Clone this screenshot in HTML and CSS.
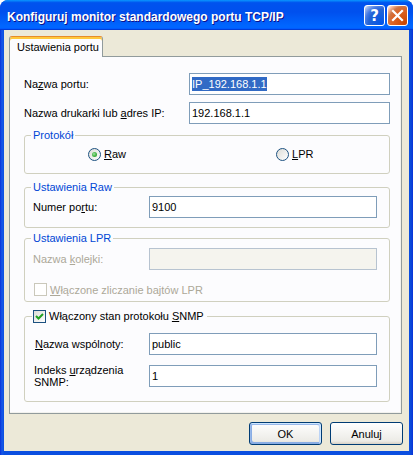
FILE: index.html
```html
<!DOCTYPE html>
<html lang="pl">
<head>
<meta charset="utf-8">
<title>Konfiguruj monitor</title>
<link rel="stylesheet" href="styles.css">
</head>
<body>
<div class="window">
  <div class="titlebar">
    <span class="title">Konfiguruj monitor standardowego portu TCP/IP</span>
    <div class="tb-buttons">
      <span class="tb-btn help">?</span>
      <span class="tb-btn close"><svg width="19" height="19" viewBox="0 0 19 19"><path d="M5 5 L14 14 M14 5 L5 14" stroke="#fff" stroke-width="2.2" stroke-linecap="square"/></svg></span>
    </div>
  </div>
  <div class="frame">
    <div class="tabs"><div class="tab">Ustawienia portu</div></div>
    <div class="panel">
      <div class="row">
        <span class="lbl">Na<u>z</u>wa portu:</span>
        <div class="input"><span class="sel">IP_192.168.1.1</span></div>
      </div>
      <div class="row">
        <span class="lbl">Nazwa drukarki lub <u>a</u>dres IP:</span>
        <div class="input">192.168.1.1</div>
      </div>

      <fieldset class="group proto">
        <legend>Protokół</legend>
        <div class="radios">
          <span class="radio-item first"><span class="radio checked"></span><span><u>R</u>aw</span></span>
          <span class="radio-item"><span class="radio"></span><span><u>L</u>PR</span></span>
        </div>
      </fieldset>

      <fieldset class="group raw">
        <legend>Ustawienia Raw</legend>
        <div class="grow">
          <span class="lbl">Numer po<u>r</u>tu:</span>
          <div class="input">9100</div>
        </div>
      </fieldset>

      <fieldset class="group lpr">
        <legend>Ustawienia LPR</legend>
        <div class="grow disabled">
          <span class="lbl">Nazwa <u>k</u>olejki:</span>
          <div class="input off"></div>
        </div>
        <div class="check-row disabled">
          <span class="cbox off"></span><span><u>W</u>łączone zliczanie bajtów LPR</span>
        </div>
      </fieldset>

      <fieldset class="group snmp">
        <legend class="check-legend"><span class="cbox on"><svg width="11" height="11" viewBox="0 0 11 11"><path d="M2 5 L4.5 7.5 L9 3" fill="none" stroke="#21A121" stroke-width="2"/></svg></span><span>Włączony stan protokołu <u>S</u>NMP</span></legend>
        <div class="grow">
          <span class="lbl ind2"><u>N</u>azwa wspólnoty:</span>
          <div class="input">public</div>
        </div>
        <div class="grow second">
          <span class="lbl two ind1">Indeks <u>u</u>rządzenia<br>SNMP:</span>
          <div class="input">1</div>
        </div>
      </fieldset>
    </div>
    <div class="buttons">
      <span class="btn default">OK</span>
      <span class="btn">Anuluj</span>
    </div>
  </div>
</div>
</body>
</html>
```
FILE: styles.css
```css
* { box-sizing: border-box; }
html, body { margin: 0; padding: 0; }
body {
  width: 413px;
  height: 455px;
  overflow: hidden;
  background: #ffffff;
  font-family: "Liberation Sans", Arial, sans-serif;
  font-size: 11px;
  color: #000;
}
u { text-decoration: underline; text-underline-offset: 1px; }

.window {
  width: 413px;
  height: 455px;
  display: flex;
  flex-direction: column;
  background: linear-gradient(90deg, #0831D9 0, #1658E8 2px, #0B4FE0 4px, #0B4FE0 409px, #0A48D8 411px, #0831D9 413px);
  border-radius: 8px 8px 0 0;
  overflow: hidden;
}

.titlebar {
  height: 30px;
  flex: none;
  display: flex;
  justify-content: space-between;
  align-items: flex-start;
  padding: 0 5px 0 7px;
  background: linear-gradient(180deg, #0997FF 0%, #0053EE 9%, #0050EE 40%, #0066FF 86%, #0066FF 92%, #005BFF 95%, #003DD7 97%, #003DD7 100%);
}
.title {
  color: #fff;
  font-weight: bold;
  font-size: 12px;
  line-height: 16px;
  margin-top: 9px;
  letter-spacing: 0;
  text-shadow: 1px 1px #0F1089;
  white-space: nowrap;
}
.tb-buttons { display: flex; gap: 2px; margin-top: 5px; }
.tb-btn {
  width: 21px;
  height: 21px;
  border: 1px solid #fff;
  border-radius: 3px;
  display: flex;
  align-items: center;
  justify-content: center;
  color: #fff;
  font-family: "DejaVu Sans", sans-serif;
  font-weight: bold;
  font-size: 15px;
}
.help {
  background: radial-gradient(circle at 90% 90%, #0054E9 0%, #2263D5 55%, #4479E4 70%, #A3BBEC 90%, #fff 100%);
}
.close {
  background: radial-gradient(circle at 90% 90%, #CC4600 0%, #DC6527 55%, #CD7546 70%, #FFCCB2 90%, #fff 100%);
}

.frame {
  flex: 1;
  margin: 0 4px 4px 4px;
  background: #ECE9D8;
  padding: 6px 7px 0 5px;
  display: flex;
  flex-direction: column;
}

.tabs { display: flex; height: 20px; }
.tab {
  position: relative;
  z-index: 1;
  width: 94px;
  height: 21px;
  background: #FCFCFE;
  border: 1px solid #919B9C;
  border-top: 1px solid #E68B2C;
  border-bottom: none;
  border-radius: 3px 3px 0 0;
  box-shadow: inset 0 2px #FFC83C;
  padding: 4px 0 0 7px;
  line-height: 13px;
  white-space: nowrap;
}

.panel {
  height: 358px;
  background: #FCFCFE;
  border: 1px solid #919B9C;
  box-shadow: inset -1px -1px #F2F2EE;
  padding: 16px 11px 0 14px;
  display: flex;
  flex-direction: column;
}

.row {
  display: grid;
  grid-template-columns: 165px 201px;
  align-items: center;
  height: 22px;
}
.row + .row { margin-top: 7px; }

.input {
  height: 22px;
  border: 1px solid #7F9DB9;
  background: #fff;
  padding: 0 2px;
  line-height: 20px;
  white-space: nowrap;
}
.input.off { background: #F5F4EE; border-color: #B7C3D0; }
.sel { background: #316AC5; color: #fff; padding: 1px 0; }

.group {
  margin: 0;
  padding: 0 8px;
  border: 1px solid #D0D0BF;
  border-radius: 3px;
  min-width: 0;
}
.group legend {
  color: #0046D5;
  padding: 0 2px;
  margin-left: -2px;
  line-height: 13px;
}
.proto { margin-top: 5px; padding-top: 6px; padding-bottom: 12px; }
.raw { margin-top: 7px; padding-top: 2px; padding-bottom: 9px; }
.lpr { margin-top: 4px; padding-top: 3px; padding-bottom: 5px; }
.snmp { margin-top: 8px; padding-top: 10px; padding-bottom: 13px; }

.radios { display: flex; padding-left: 55px; height: 13px; line-height: 13px; }
.radio-item { display: flex; align-items: center; gap: 3px; }
.radio-item.first { width: 188px; }
.radio {
  width: 13px;
  height: 13px;
  border-radius: 50%;
  border: 1px solid #1D5281;
  background: linear-gradient(135deg, #DCDCD7, #fff);
  display: flex;
  align-items: center;
  justify-content: center;
}
.radio.checked::after {
  content: "";
  width: 5px;
  height: 5px;
  border-radius: 50%;
  background: radial-gradient(circle at 40% 40%, #A6E0A6 0%, #4DBB4D 45%, #1E8C1E 100%);
}

.grow {
  display: grid;
  grid-template-columns: 116px 228px;
  align-items: center;
  min-height: 22px;
}
.grow.second { margin-top: 9px; }
.lbl.two { line-height: 12px; }
.ind2 { padding-left: 2px; }
.ind1 { padding-left: 1px; }
.disabled { color: #ACA899; }

.check-row {
  display: flex;
  align-items: center;
  gap: 3px;
  margin-top: 13px;
  height: 13px;
  padding-left: 1px;
}
.cbox {
  width: 13px;
  height: 13px;
  border: 1px solid #1C5180;
  background: linear-gradient(135deg, #DCDCD7, #fff);
  display: flex;
  align-items: center;
  justify-content: center;
  flex: none;
}
.cbox.off { border-color: #CAC8BB; background: #fff; }
.group legend.check-legend {
  color: #000;
  display: flex;
  align-items: center;
  gap: 3px;
  padding: 0 3px 0 1px;
  margin-left: -1px;
}

.buttons {
  display: flex;
  justify-content: flex-end;
  gap: 8px;
  margin-top: 8px;
  margin-right: -1px;
}
.btn {
  width: 73px;
  height: 23px;
  border: 1px solid #003C74;
  border-radius: 3px;
  background: linear-gradient(180deg, #fff 0%, #ECEBE6 86%, #D6D0C5 100%);
  display: flex;
  align-items: center;
  justify-content: center;
}
.btn.default {
  box-shadow: inset -1px 1px #CEE7FF, inset 1px 2px #98B8EA, inset -2px 2px #BCD4F6, inset 1px -1px #89ADE4, inset 2px -2px #89ADE4;
}
```
